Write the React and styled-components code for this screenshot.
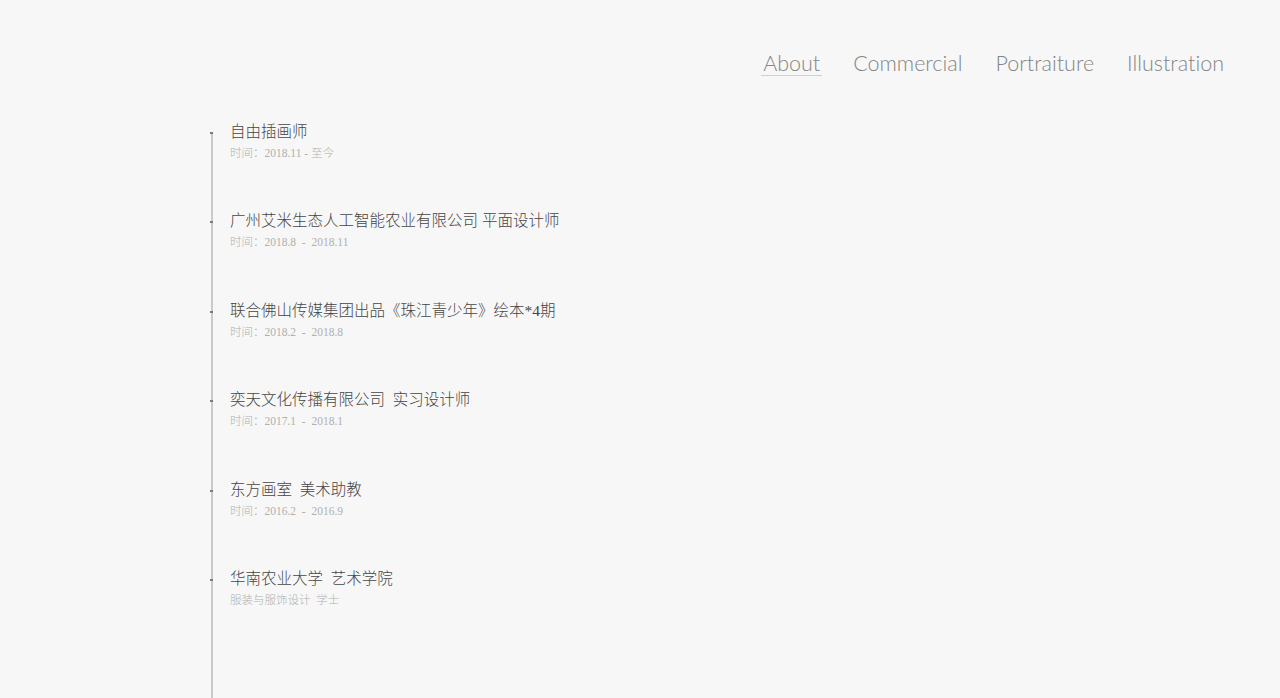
import React from 'react';
import styled, { createGlobalStyle } from 'styled-components';

const GlobalStyle = createGlobalStyle`
  html, body {
    margin: 0;
    padding: 0;
    background: #f7f7f7;
  }
`;

const Page = styled.div`
  display: flex;
  flex-direction: column;
  min-height: 100vh;
  background: #f7f7f7;
  overflow: hidden;
`;

const Nav = styled.nav`
  display: flex;
  justify-content: flex-end;
  gap: 33px;
  padding: 48px 56px 0 0;
`;

const NavLink = styled.a`
  position: relative;
  font-family: 'Lato', sans-serif;
  font-weight: 300;
  font-size: 21.5px;
  line-height: 30px;
  color: #858585;
  text-decoration: none;
  font-variant-ligatures: none;
  cursor: pointer;

  &::after {
    content: '';
    display: ${(p) => (p.$active ? 'block' : 'none')};
    position: absolute;
    left: -2px;
    right: -2px;
    bottom: 2px;
    height: 1px;
    background: #cfcfcf;
  }
`;

const Timeline = styled.div`
  flex: 1;
  margin: 54px 0 0 211px;
  padding-left: 17px;
  border-left: 2px solid #cacaca;
`;

const Item = styled.div`
  position: relative;
  display: flex;
  flex-direction: column;
  gap: 3px;
  margin-bottom: 50.4px;

  &:first-child {
    margin-top: -10px;
  }

  &::before {
    content: '';
    position: absolute;
    left: -20px;
    top: 10px;
    width: 3px;
    height: 2px;
    background: #7a7a7a;
  }
`;

const Title = styled.div`
  font-family: 'Liberation Serif', 'Noto Sans CJK SC', serif;
  font-weight: 300;
  font-size: 15.5px;
  line-height: 20px;
  color: #454545;
  white-space: pre;
`;

const Sub = styled.div`
  font-family: 'Liberation Serif', 'Noto Sans CJK SC', serif;
  font-weight: 300;
  font-size: 11.5px;
  line-height: 16px;
  color: #b0b0b0;
  white-space: pre;
`;

const links = ['About', 'Commercial', 'Portraiture', 'Illustration'];

const items = [
  { title: '自由插画师', sub: '时间：2018.11 - 至今' },
  { title: '广州艾米生态人工智能农业有限公司 平面设计师', sub: '时间：2018.8  -  2018.11' },
  { title: '联合佛山传媒集团出品《珠江青少年》绘本*4期', sub: '时间：2018.2  -  2018.8' },
  { title: '奕天文化传播有限公司  实习设计师', sub: '时间：2017.1  -  2018.1' },
  { title: '东方画室  美术助教', sub: '时间：2016.2  -  2016.9' },
  { title: '华南农业大学  艺术学院', sub: '服装与服饰设计  学士' },
];

export default function App() {
  return (
    <Page>
      <GlobalStyle />
      <Nav>
        {links.map((l, i) => (
          <NavLink key={l} $active={i === 0}>
            {l}
          </NavLink>
        ))}
      </Nav>
      <Timeline>
        {items.map((it) => (
          <Item key={it.title}>
            <Title>{it.title}</Title>
            <Sub>{it.sub}</Sub>
          </Item>
        ))}
      </Timeline>
    </Page>
  );
}
